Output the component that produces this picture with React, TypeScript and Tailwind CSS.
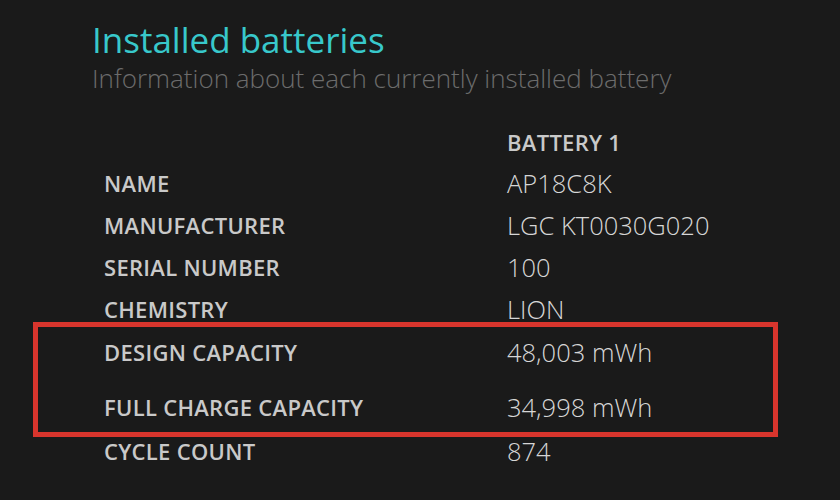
import React from "react";

const rows: { label: string; value: string; cls: string }[] = [
  { label: "NAME", value: "AP18C8K", cls: "h-[42px]" },
  { label: "MANUFACTURER", value: "LGC KT0030G020", cls: "h-[42px]" },
  { label: "SERIAL NUMBER", value: "100", cls: "h-[42px]" },
  { label: "CHEMISTRY", value: "LION", cls: "h-[34px] pt-[8px]" },
];

const labelCls = "w-[403px] shrink-0 text-[22px] font-semibold tracking-[0.3px] text-[#c9c9c9]";
const valueCls = "text-[25.5px] font-light text-[#d6d6d6]";

function Row({ label, value, cls }: { label: string; value: string; cls: string }) {
  return (
    <div className={`flex items-center ${cls}`}>
      <div className={labelCls}>{label}</div>
      <div className={valueCls}>{value}</div>
    </div>
  );
}

export default function App() {
  return (
    <div
      className="w-[840px] h-[500px] overflow-hidden bg-[#1a1a1a]"
      style={{ fontFamily: '"Open Sans", "Noto Sans", sans-serif' }}
    >
      <div className="pl-[92px] pt-[20px]">
        <div className="text-[35px] leading-[40px] text-[#38c8cb]">Installed batteries</div>
        <div className="text-[26px] leading-[36px] font-light text-[#6c6c6c]">
          Information about each currently installed battery
        </div>
      </div>
      <div className="pl-[104px] mt-[26px]">
        <div className="flex h-[40px] items-center">
          <div className="w-[403px] shrink-0" />
          <div className="text-[22px] font-semibold tracking-[0.3px] text-[#c9c9c9]">BATTERY 1</div>
        </div>
        {rows.map((r) => (
          <Row key={r.label} {...r} />
        ))}
      </div>
      <div className="ml-[33px] mr-[62px] h-[115px] border-[5px] border-[#d8352d] pl-[66px] flex flex-col">
        <div className="flex items-center h-[50px]">
          <div className={labelCls}>DESIGN CAPACITY</div>
          <div className={valueCls}>48,003 mWh</div>
        </div>
        <div className="flex items-center h-[49px] mt-[6px]">
          <div className={labelCls}>FULL CHARGE CAPACITY</div>
          <div className={valueCls}>34,998 mWh</div>
        </div>
      </div>
      <div className="pl-[104px]">
        <Row label="CYCLE COUNT" value="874" cls="h-[28px]" />
      </div>
    </div>
  );
}
